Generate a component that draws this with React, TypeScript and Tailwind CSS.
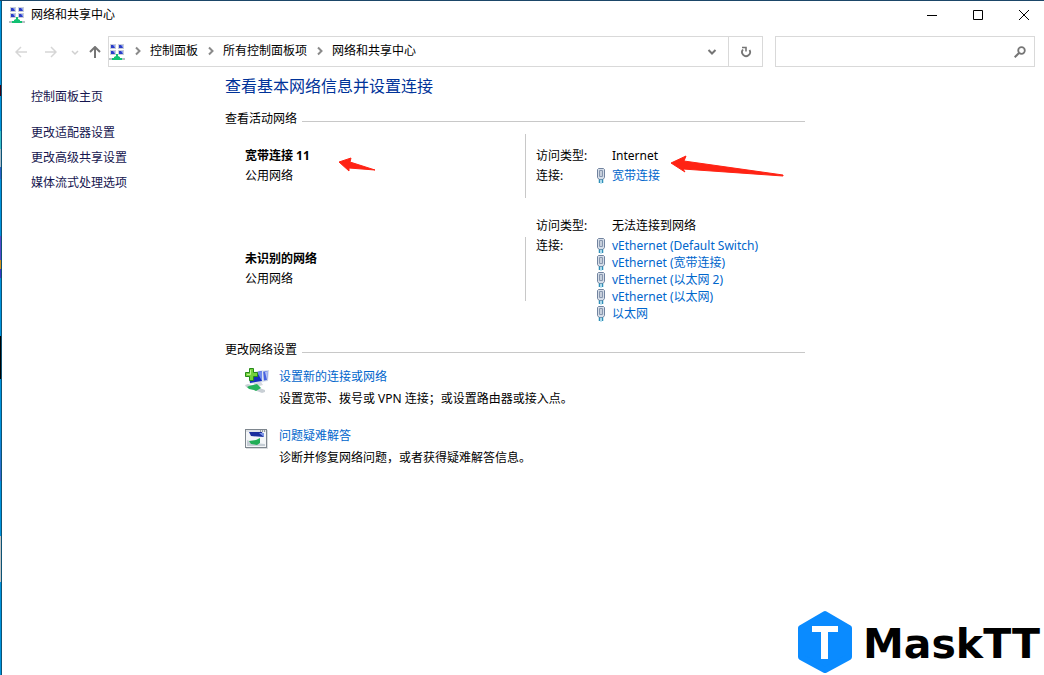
import clsx from "clsx";
import { ReactElement, ReactNode } from "react";

const BREADCRUMBS = ["控制面板", "所有控制面板项", "网络和共享中心"];

const SIDEBAR_LINKS = ["更改适配器设置", "更改高级共享设置", "媒体流式处理选项"];

const NETWORKS = [
	{
		name: "宽带连接 11",
		category: "公用网络",
		access: "Internet",
		connections: ["宽带连接"],
	},
	{
		name: "未识别的网络",
		category: "公用网络",
		access: "无法连接到网络",
		connections: [
			"vEthernet (Default Switch)",
			"vEthernet (宽带连接)",
			"vEthernet (以太网 2)",
			"vEthernet (以太网)",
			"以太网",
		],
	},
];

const TASKS = [
	{
		title: "设置新的连接或网络",
		description: "设置宽带、拨号或 VPN 连接；或设置路由器或接入点。",
		icon: <NewConnectionIcon />,
	},
	{
		title: "问题疑难解答",
		description: "诊断并修复网络问题，或者获得疑难解答信息。",
		icon: <TroubleshootIcon />,
	},
];

function NetworkIcon(): ReactElement {
	return (
		<svg viewBox="0 0 16 16" className="w-4 h-4 shrink-0" aria-hidden="true">
			{[
				[1, 0],
				[9, 0],
				[1, 6],
				[9, 6],
			].map(([x, y]) => (
				<g key={`${x}-${y}`}>
					<rect x={x} y={y} width="6" height="5" fill="#c9ced8" />
					<rect x={x + 1} y={y + 1} width="4" height="3" fill="#2a3cc8" />
					<path d={`M${x + 3} ${y + 1}h2v3z`} fill="#8fa6f0" />
				</g>
			))}
			<path d="M0 14h16v2H0z" fill="#b9c0c4" />
			<path d="M7 10h2v2l2 1v1h2v2H3v-2h2v-1l2-1z" fill="#12c072" />
		</svg>
	);
}

function PlugIcon(): ReactElement {
	return (
		<svg viewBox="0 0 10 16" className="w-[10px] h-4 shrink-0" aria-hidden="true">
			<path d="M2.500 .5h5l1 1v8l-1.500 2H3L1.500 9.500v-8z" fill="#d5dde8" stroke="#71839f" />
			<path d="M3.500 2.500h3v6h-3z" fill="#f3f6fa" stroke="#8796ae" />
			<path d="M5 3v5" stroke="#9aa8bc" />
			<path d="M3.500 11.500V15M6.500 11.500V15" stroke="#2f8fb8" strokeWidth="1.500" />
			<path d="M5 11.500V16" stroke="#8fd2ea" />
		</svg>
	);
}

function NewConnectionIcon(): ReactElement {
	return (
		<svg viewBox="0 0 24 26" className="w-6 h-[26px]" aria-hidden="true">
			<path d="M15 3l9-1-1 11-8 1z" fill="#cfd8e6" />
			<path d="M16 4l7-1-1 9-6 1z" fill="#4763df" />
			<path d="M20 4l3-1-1 9z" fill="#b4c3f5" />
			<path d="M3 5l15-3 1 12-14 2z" fill="#dfe5ee" />
			<path d="M4 6l13-3v10L5 15z" fill="#1730bd" />
			<path d="M12 4l5-1v10z" fill="#6f8bee" />
			<path d="M9 15l7-1 2 3-8 2z" fill="#d4d8de" />
			<path d="M0 17l3-1 17 6v2l-3 1L1 19z" fill="#c9cfd5" />
			<path d="M4 18l8-2 2 2 2 2-5 3-2-1-5-1-2-2z" fill="#27b35c" />
			<path
				d="M4.500 .5h4v4h4v4h-4v4h-4v-4h-4v-4h4z"
				fill="#74d23c"
				stroke="#278a1b"
			/>
			<path d="M5.500 2v4.500H2" stroke="#bdf28f" fill="none" />
		</svg>
	);
}

function TroubleshootIcon(): ReactElement {
	return (
		<svg viewBox="0 0 24 26" className="w-6 h-[26px]" aria-hidden="true">
			<path d="M1 3h22v19H1z" fill="#dadde0" />
			<rect x=".5" y="2.500" width="21" height="18" fill="#f4f6f8" stroke="#7e868e" />
			<path d="M1 3h20v2H1z" fill="#dfe3e8" />
			<path d="M15 4h1M17 4h1M19 4h1" stroke="#4a5057" />
			<path d="M4 5h13l2 5-13-1z" fill="#1b2f9e" />
			<path d="M14 6h5v4z" fill="#7d94e6" />
			<path d="M2 13l7 3 11 1v2H2z" fill="#c5cdd5" />
			<path d="M4 14l7-1 4-2v5l-3 2-6-1z" fill="#22ae57" />
		</svg>
	);
}

function Chevron({ className }: { className?: string }): ReactElement {
	return (
		<svg viewBox="0 0 10 10" className={clsx("w-[10px] h-[10px]", className)} aria-hidden="true">
			<path d="M1.500 3L5 6.500 8.500 3" fill="none" stroke="currentColor" strokeWidth="2" />
		</svg>
	);
}

function TitleBar(): ReactElement {
	return (
		<header className="flex h-7 items-center pl-[7px]">
			<NetworkIcon />
			<h1 className="ml-[6px] grow">网络和共享中心</h1>
			<div className="flex gap-[6px]">
				<button aria-label="最小化" className="flex h-7 w-10 items-center justify-center">
					<svg viewBox="0 0 10 10" className="w-[10px] h-[10px]">
						<path d="M0 5.500h10" stroke="#000" />
					</svg>
				</button>
				<button aria-label="最大化" className="flex h-7 w-10 items-center justify-center">
					<svg viewBox="0 0 10 10" className="w-[10px] h-[10px]">
						<path d="M.5 .5h9v9h-9z" fill="none" stroke="#000" />
					</svg>
				</button>
				<button aria-label="关闭" className="flex h-7 w-10 items-center justify-center">
					<svg viewBox="0 0 10 10" className="w-[10px] h-[10px]">
						<path d="M0 0l10 10M10 0L0 10" stroke="#000" />
					</svg>
				</button>
			</div>
		</header>
	);
}

function NavButton({
	label,
	className,
	children,
}: {
	label: string;
	className: string;
	children: ReactNode;
}): ReactElement {
	return (
		<button
			aria-label={label}
			className={clsx("flex shrink-0 items-center justify-center", className)}
		>
			{children}
		</button>
	);
}

function AddressBar(): ReactElement {
	return (
		<nav className="mt-[7px] flex h-[31px] pl-1 pr-[9px]">
			<NavButton label="后退" className="w-[30px] text-[#d6d6d6]">
				<svg viewBox="0 0 12 12" className="w-3 h-3">
					<path d="M12 6H1M6 1L1 6l5 5" fill="none" stroke="currentColor" strokeWidth="1.500" />
				</svg>
			</NavButton>
			<NavButton label="前进" className="w-[30px] text-[#d6d6d6]">
				<svg viewBox="0 0 12 12" className="w-3 h-3">
					<path d="M0 6h11M6 1l5 5-5 5" fill="none" stroke="currentColor" strokeWidth="1.500" />
				</svg>
			</NavButton>
			<NavButton label="最近浏览的位置" className="w-[17px] text-[#d0d0d0]">
				<svg viewBox="0 0 8 8" className="w-2 h-2">
					<path d="M1 3l3 3 3-3" fill="none" stroke="currentColor" strokeWidth="1.500" />
				</svg>
			</NavButton>
			<NavButton label="上移" className="w-6 text-[#757575]">
				<svg viewBox="0 0 12 12" className="w-3 h-3">
					<path d="M6 12V1M1 6l5-5 5 5" fill="none" stroke="currentColor" strokeWidth="2" />
				</svg>
			</NavButton>
			<div className="ml-px flex min-w-0 grow items-center border border-[#d9d9d9]">
				<NetworkIcon />
				<ol className="flex grow pb-px">
					{BREADCRUMBS.map((crumb) => (
						<li key={crumb} className="flex items-center">
							<span className="flex w-[25px] justify-center text-[#8a8a8a]">
								<Chevron className="w-2 h-2 -rotate-90" />
							</span>
							<a href="#" className="whitespace-nowrap">
								{crumb}
							</a>
						</li>
					))}
				</ol>
				<NavButton label="以前的位置" className="h-full w-8 text-[#757575]">
					<Chevron />
				</NavButton>
				<NavButton label="刷新" className="h-full w-[34px] border-l border-[#d9d9d9] text-[#757575]">
					<svg viewBox="0 0 12 12" className="w-3 h-3">
						<path
							d="M3 3.500A4 4 0 1 0 9.500 4"
							fill="none"
							stroke="currentColor"
							strokeWidth="1.800"
						/>
						<path d="M2 1.500H6V5.500" fill="none" stroke="currentColor" strokeWidth="1.600" />
					</svg>
				</NavButton>
			</div>
			<form className="ml-3 flex w-[260px] shrink-0 items-center border border-[#d9d9d9]">
				<input
					type="search"
					aria-label="搜索控制面板"
					className="min-w-0 grow bg-transparent px-2 outline-none"
				/>
				<NavButton label="搜索" className="h-full w-7 text-[#757575]">
					<svg viewBox="0 0 12 12" className="w-3 h-3">
						<circle cx="7.500" cy="4.500" r="3.300" fill="none" stroke="currentColor" strokeWidth="1.800" />
						<path d="M5 7L.7 11.300" stroke="currentColor" strokeWidth="2" />
					</svg>
				</NavButton>
			</form>
		</nav>
	);
}

function Sidebar(): ReactElement {
	return (
		<aside className="w-[223px] shrink-0 pl-[29px] pt-5 leading-5 text-[#15154f]">
			<a href="#" className="block">
				控制面板主页
			</a>
			<ul className="mt-4 flex flex-col gap-[5px]">
				{SIDEBAR_LINKS.map((link) => (
					<li key={link}>
						<a href="#">{link}</a>
					</li>
				))}
			</ul>
		</aside>
	);
}

function SectionTitle({ children }: { children: ReactNode }): ReactElement {
	return (
		<div className="flex h-[18px] items-center gap-[5px]">
			<h3 className="shrink-0">{children}</h3>
			<div className="mt-1 h-px grow bg-[#c8c8c8]" />
		</div>
	);
}

function Arrow({ points, className }: { points: string; className: string }): ReactElement {
	return (
		<svg className={clsx("absolute overflow-visible", className)} aria-hidden="true">
			<polygon points={points} fill="#ff2314" stroke="#ff2314" strokeLinejoin="round" />
		</svg>
	);
}

function Networks(): ReactElement {
	return (
		<ul className="relative mt-[6px] mb-[19px] flex flex-col gap-[18px]">
			{NETWORKS.map((network) => (
				<li key={network.name} className="flex min-h-16 items-center">
					<div className="w-[300px] pl-5 leading-5">
						<p className="font-bold">{network.name}</p>
						<p>{network.category}</p>
					</div>
					<div className="h-16 w-px bg-[#c8c8c8]" />
					<dl className="grid grid-cols-[60px_1fr] pl-[10px] leading-5">
						<dt>访问类型:</dt>
						<dd className="pl-4">{network.access}</dd>
						<dt>连接:</dt>
						<dd>
							<ul className="flex flex-col">
								{network.connections.map((connection) => (
									<li key={connection} className="flex items-center gap-[6px] first:pt-px">
										<PlugIcon />
										<a href="#" className="leading-[17px] text-[#0066cc]">
											{connection}
										</a>
									</li>
								))}
							</ul>
						</dd>
					</dl>
				</li>
			))}
			<Arrow
				className="left-[114px] top-6 h-3 w-9"
				points="0,4 12,0 11,4 36,12 10,10 10,13"
			/>
			<Arrow
				className="left-[446px] top-[22px] h-5 w-[113px]"
				points="0,7 15,0 13,5 112,19 112,20 12,13 14,16"
			/>
		</ul>
	);
}

function Tasks(): ReactElement {
	return (
		<ul className="mt-[7px] flex flex-col gap-[15px] pl-5">
			{TASKS.map((task) => (
				<li key={task.title} className="flex gap-[10px] leading-[22px]">
					<div className="pt-[2px]">{task.icon}</div>
					<div>
						<a href="#" className="block text-[#0066cc]">
							{task.title}
						</a>
						<p>{task.description}</p>
					</div>
				</li>
			))}
		</ul>
	);
}

function Watermark(): ReactElement {
	return (
		<div className="absolute bottom-px right-1 flex h-16 items-center gap-[14px]">
			<svg viewBox="0 0 56 64" className="h-16 w-14" aria-hidden="true">
				<path
					d="M28 4L52 18V47L28 60L4 47V18Z"
					fill="#0a8bff"
					stroke="#0a8bff"
					strokeWidth="6"
					strokeLinejoin="round"
				/>
				<path d="M15 16h26v6H31v27h-7V22h-9z" fill="#fff" />
			</svg>
			<svg className="h-16 w-[173px] overflow-visible" role="img" aria-label="MaskTT">
				<text
					x="-4"
					y="48"
					className="fill-black font-['DejaVu_Sans'] text-[41px] font-bold"
				>
					MaskTT
				</text>
			</svg>
		</div>
	);
}

export default function App(): ReactElement {
	return (
		<div className="relative flex min-h-screen overflow-hidden border-t border-[#1b4668] bg-white font-['Noto_Sans','Noto_Sans_CJK_SC',sans-serif] text-xs text-black">
			{/* sliver of the desktop behind the window */}
			<div className="w-0.5 shrink-0 border-r border-[#0d5273] bg-[linear-gradient(#0093dd_84px,#400010_84px_95px,#0093dd_95px_130px,#35c0cc_130px_148px,#a9bcc8_148px_166px,#2a62c8_166px_178px,#0093dd_178px_235px,#5548cc_235px_259px,#d0901c_259px_268px,#3a36c4_268px_277px,#0093dd_277px_335px,#000_335px_378px,#0093dd_378px_430px,#3d62cc_480px,#0093dd_480px_535px,#c4c4c4_535px_581px,#0093dd_581px)]" />
			<div className="min-w-0 grow">
				<TitleBar />
				<AddressBar />
				<div className="flex">
					<Sidebar />
					<main className="w-[580px] pt-[7px]">
						<h2 className="mb-3 text-base leading-6 text-[#003399]">
							查看基本网络信息并设置连接
						</h2>
						<SectionTitle>查看活动网络</SectionTitle>
						<Networks />
						<SectionTitle>更改网络设置</SectionTitle>
						<Tasks />
					</main>
				</div>
			</div>
			<Watermark />
		</div>
	);
}
